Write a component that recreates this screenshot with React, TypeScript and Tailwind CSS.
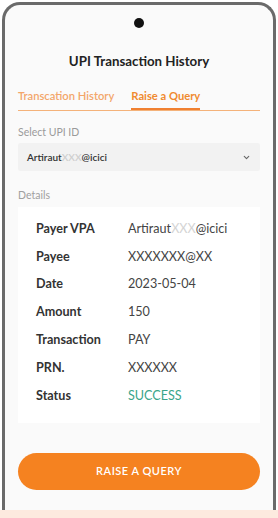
import React from 'react';
import { ChevronDown } from 'lucide-react';

const rows: { label: string; value: React.ReactNode; green?: boolean }[] = [
  {
    label: 'Payer VPA',
    value: (
      <>
        Artiraut<span className="text-[#d4d4d4]">XXX</span>@icici
      </>
    ),
  },
  { label: 'Payee', value: 'XXXXXXX@XX' },
  { label: 'Date', value: '2023-05-04' },
  { label: 'Amount', value: '150' },
  { label: 'Transaction', value: 'PAY' },
  { label: 'PRN.', value: 'XXXXXX' },
  { label: 'Status', value: 'SUCCESS', green: true },
];

export default function App() {
  return (
    <div className="w-[278px] h-[518px] bg-white flex flex-col overflow-hidden" style={{ fontFamily: 'Lato, "Open Sans", sans-serif' }}>
      {/* phone frame */}
      <div className="mx-[2px] mt-[2px] h-[508px] rounded-t-[18px] border-[3px] border-b-0 border-[#6a6a6a] bg-[#fafafa] flex flex-col px-[13px]">
        <div className="flex justify-center pt-[13px]">
          <div className="w-[10px] h-[10px] rounded-full bg-[#111]" />
        </div>

        <h1 className="mt-[24px] text-center text-[13.3px] font-bold text-[#222]">UPI Transaction History</h1>

        {/* tabs */}
        <div className="mt-[16px] flex gap-[17px] border-b border-[#f4b27a]">
          <div className="pb-[5px] text-[11.2px] font-semibold text-[#f3a66a]">Transcation History</div>
          <div className="pb-[3px] border-b-[2px] border-[#f08030] text-[11.2px] font-bold text-[#f08a30]">Raise a Query</div>
        </div>

        <div className="mt-[14px] text-[10.5px] text-[#9a9a9a]">Select UPI ID</div>
        <div className="mt-[3px] h-[28px] bg-[#f2f2f2] rounded-[2px] flex items-center justify-between pl-[9px] pr-[9px]">
          <span className="text-[10px] font-semibold text-[#333]">
            Artiraut<span className="text-[#cfcfcf]">XXX</span>@icici
          </span>
          <ChevronDown size={9} strokeWidth={3} className="text-[#666]" />
        </div>

        <div className="mt-[17px] text-[10.5px] text-[#a0a0a0]">Details</div>

        {/* details card */}
        <div className="mt-[3px] bg-white pt-[13px] pb-[18px] pl-[18px] pr-[10px] flex flex-col gap-[9.8px]">
          {rows.map((r) => (
            <div key={r.label} className="flex items-center h-[18px]">
              <div className="w-[92px] shrink-0 text-[12.6px] font-bold text-[#333]">{r.label}</div>
              <div className={`text-[12.6px] ${r.green ? 'text-[#3aa58a]' : 'text-[#444]'}`}>{r.value}</div>
            </div>
          ))}
        </div>

        <button className="mt-[30px] h-[37px] rounded-full bg-[#f58220] text-white text-[11px] font-semibold tracking-[0.5px]">
          RAISE A QUERY
        </button>
      </div>
      <div className="flex-1 bg-[#fdeadf]" />
    </div>
  );
}
